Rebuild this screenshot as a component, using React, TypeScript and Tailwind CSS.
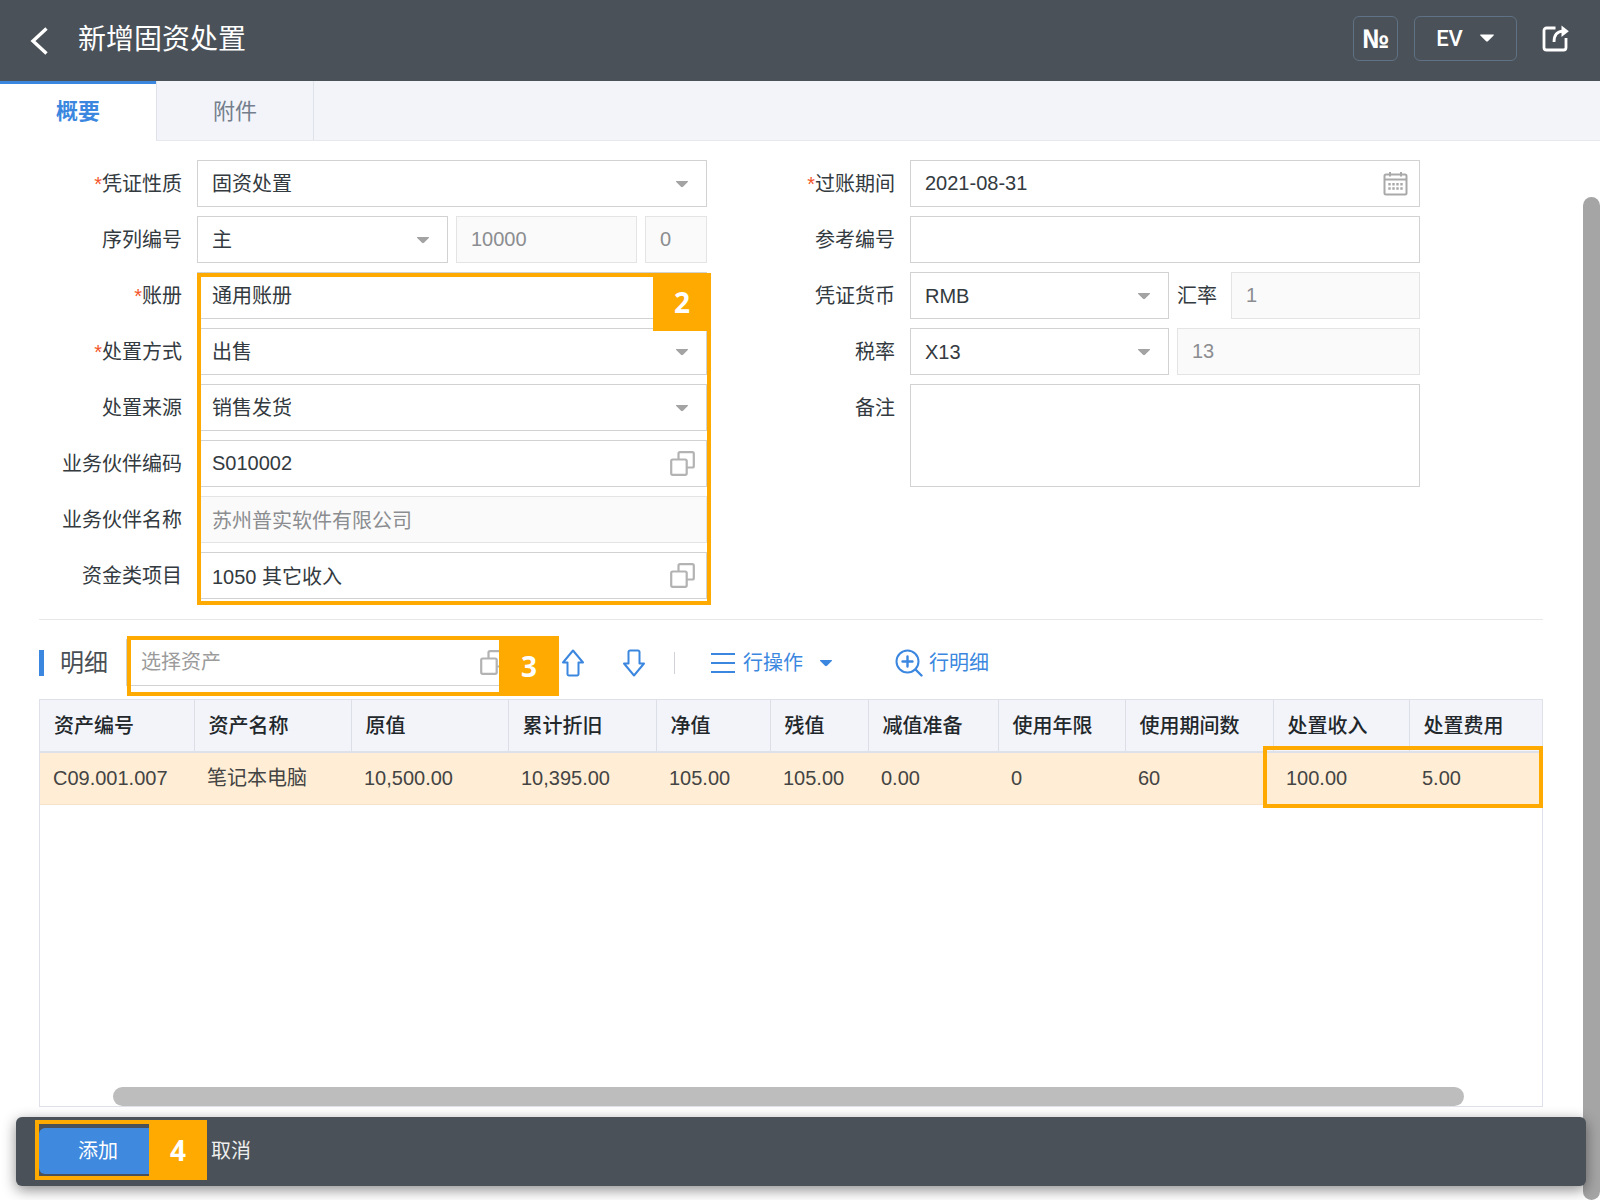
import { useState } from "react";
import type { ReactNode } from "react";

const FIELD =
  "h-[47px] w-full appearance-none rounded-none border border-[#d2d2d2] bg-white px-[14px] text-xl text-[#333a40] outline-none placeholder:text-[#9b9b9b] disabled:border-[#e4e4e4] disabled:bg-[#fafafa] disabled:text-[#8b8d90] disabled:opacity-100";

const LABEL = "pt-[2px] text-xl leading-[45px] whitespace-nowrap text-[#333a40]";

type TabId = "summary" | "attachments";

const TABS: { id: TabId; label: string }[] = [
  { id: "summary", label: "概要" },
  { id: "attachments", label: "附件" },
];

const COLUMNS: { title: string; value: string; width: string }[] = [
  { title: "资产编号", value: "C09.001.007", width: "w-[154px]" },
  { title: "资产名称", value: "笔记本电脑", width: "w-[157px]" },
  { title: "原值", value: "10,500.00", width: "w-[157px]" },
  { title: "累计折旧", value: "10,395.00", width: "w-[148px]" },
  { title: "净值", value: "105.00", width: "w-[114px]" },
  { title: "残值", value: "105.00", width: "w-[98px]" },
  { title: "减值准备", value: "0.00", width: "w-[130px]" },
  { title: "使用年限", value: "0", width: "w-[127px]" },
  { title: "使用期间数", value: "60", width: "w-[148px]" },
  { title: "处置收入", value: "100.00", width: "w-[136px]" },
  { title: "处置费用", value: "5.00", width: "w-[133px]" },
];

/* Icons */

function Caret({ className }: { className: string }) {
  return (
    <svg viewBox="0 0 14 8" className={className} fill="currentColor" aria-hidden="true">
      <path d="M1.6 1h10.8c.6 0 .8.5.4.9L8 6.7c-.6.6-1.4.6-2 0L1.2 1.9C.8 1.5 1 1 1.600 1z" />
    </svg>
  );
}

function PickerIcon() {
  return (
    <svg viewBox="0 0 25 25" className="size-[25px]" fill="none" stroke="#b3b3b3" strokeWidth="2.2" aria-hidden="true">
      <rect x="1.2" y="8.5" width="15.5" height="15.3" rx="1.5" />
      <path d="M8.5 8.5V2.700A1.500 1.500 0 0 1 10 1.200h12.300a1.500 1.500 0 0 1 1.500 1.500V15a1.500 1.500 0 0 1-1.500 1.500h-5.600" />
    </svg>
  );
}

function CalendarIcon() {
  return (
    <svg viewBox="0 0 25 25" className="size-[25px]" fill="none" stroke="#a9a9a9" aria-hidden="true">
      <rect x="1.5" y="3.5" width="22" height="20" rx="1.5" strokeWidth="2" />
      <path d="M1.5 8.500h22M7 1v4.500M18 1v4.500" strokeWidth="2" />
      <path d="M5.300 13.300h14.400M5.300 17.500h14.400" strokeWidth="2.400" strokeDasharray="2.400 1.600" />
    </svg>
  );
}

function ArrowIcon({ down = false }: { down?: boolean }) {
  return (
    <svg
      viewBox="0 0 24 28"
      className={down ? "h-7 w-6 rotate-180" : "h-7 w-6"}
      fill="none"
      stroke="currentColor"
      strokeWidth="2"
      strokeLinejoin="round"
      aria-hidden="true"
    >
      <path d="M12 1.500 22 13.500h-4.500V25a1.500 1.500 0 0 1-1.500 1.500H8A1.500 1.500 0 0 1 6.500 25V13.500H2z" />
    </svg>
  );
}

type MarkerProps = { className: string; flagClass?: string; step?: number };

/* Annotation frame, with a numbered flag at its right end */
function Marker({ className, flagClass = "", step }: MarkerProps) {
  return (
    <div className={`pointer-events-none absolute flex justify-end border-4 border-[#ffaa00] ${className}`}>
      {step && (
        <span
          className={`-m-1 flex items-center justify-center bg-[#ffaa00] font-['Open_Sans','Noto_Sans',sans-serif] text-[28px] leading-none font-bold text-white ${flagClass}`}
        >
          {step}
        </span>
      )}
    </div>
  );
}

type RowProps = { id: string; label: string; required?: boolean; children: ReactNode };

function Row({ id, label, required, children }: RowProps) {
  return (
    <div className="flex items-start gap-[15px]">
      <label htmlFor={id} className={`w-[182px] shrink-0 text-right ${LABEL}`}>
        {required && <span className="text-[#f4552b]">*</span>}
        {label}
      </label>
      <div className="flex min-w-0 flex-1 gap-2">{children}</div>
    </div>
  );
}

function Select({ id, value }: { id: string; value: string }) {
  return (
    <div className="relative min-w-0 flex-1">
      <select id={id} className={FIELD} defaultValue={value}>
        <option>{value}</option>
      </select>
      <Caret className="pointer-events-none absolute top-5 right-[18px] h-2 w-[14px] text-[#a3a3a3]" />
    </div>
  );
}

function Picker({ id, value, icon }: { id: string; value: string; icon: ReactNode }) {
  return (
    <div className="relative min-w-0 flex-1">
      <input id={id} type="text" className={FIELD} defaultValue={value} />
      <button type="button" aria-label="选择" className="absolute top-[11px] right-3">
        {icon}
      </button>
    </div>
  );
}

function DisposalForm() {
  return (
    <form className="grid grid-cols-2 gap-x-[6px] pt-[19px] pr-[163px]">
      <div className="flex flex-col gap-[9px]">
        <Row id="nature" label="凭证性质" required>
          <Select id="nature" value="固资处置" />
        </Row>
        <Row id="series" label="序列编号">
          <Select id="series" value="主" />
          <div className="w-[181px]">
            <input aria-label="编号" className={FIELD} defaultValue="10000" disabled />
          </div>
          <div className="w-[62px]">
            <input aria-label="版本" className={FIELD} defaultValue="0" disabled />
          </div>
        </Row>
        <div className="relative flex flex-col gap-[9px]">
          <Row id="book" label="账册" required>
            <Select id="book" value="通用账册" />
          </Row>
          <Row id="method" label="处置方式" required>
            <Select id="method" value="出售" />
          </Row>
          <Row id="source" label="处置来源">
            <Select id="source" value="销售发货" />
          </Row>
          <Row id="partner-code" label="业务伙伴编码">
            <Picker id="partner-code" value="S010002" icon={<PickerIcon />} />
          </Row>
          <Row id="partner-name" label="业务伙伴名称">
            <input id="partner-name" className={FIELD} defaultValue="苏州普实软件有限公司" disabled />
          </Row>
          <Row id="fund" label="资金类项目">
            <Picker id="fund" value="1050 其它收入" icon={<PickerIcon />} />
          </Row>
          <Marker
            className="top-px -right-1 -bottom-[6px] left-[197px]"
            flagClass="h-[58px] w-[58px]"
            step={2}
          />
        </div>
      </div>

      <div className="flex flex-col gap-[9px]">
        <Row id="period" label="过账期间" required>
          <Picker id="period" value="2021-08-31" icon={<CalendarIcon />} />
        </Row>
        <Row id="reference" label="参考编号">
          <input id="reference" className={FIELD} />
        </Row>
        <Row id="currency" label="凭证货币">
          <Select id="currency" value="RMB" />
          <label htmlFor="rate" className={LABEL}>
            汇率
          </label>
          <div className="w-[195px] pl-[6px]">
            <input id="rate" className={FIELD} defaultValue="1" disabled />
          </div>
        </Row>
        <Row id="tax" label="税率">
          <Select id="tax" value="X13" />
          <div className="w-[243px]">
            <input aria-label="税率值" className={FIELD} defaultValue="13" disabled />
          </div>
        </Row>
        <Row id="remark" label="备注">
          <textarea
            id="remark"
            className="h-[103px] w-full resize-none border border-[#d2d2d2] p-[14px] text-xl text-[#333a40] outline-none"
          />
        </Row>
      </div>
    </form>
  );
}

function DetailToolbar() {
  return (
    <div className="flex h-[47px] items-center text-xl text-[#3b87e0]">
      <h2 className="flex items-center gap-4 text-2xl text-[#4a4f55]">
        <span className="h-[26px] w-[5px] bg-[#3b87e0]" />
        明细
      </h2>
      <div className="relative ml-[18px] w-[393px]">
        <input aria-label="选择资产" placeholder="选择资产" className={FIELD} />
        <button type="button" aria-label="选择" className="absolute top-[11px] right-[14px]">
          <PickerIcon />
        </button>
        <Marker className="-top-[3px] -right-10 -bottom-[10px] left-px" flagClass="w-[60px]" step={3} />
      </div>
      <button type="button" aria-label="上移" className="ml-[42px]">
        <ArrowIcon />
      </button>
      <button type="button" aria-label="下移" className="ml-[37px]">
        <ArrowIcon down />
      </button>
      <span className="ml-7 h-[22px] w-px bg-[#cfd2d8]" />
      <button type="button" className="ml-9 flex items-center gap-2">
        <svg viewBox="0 0 24 22" className="h-[22px] w-6" fill="none" stroke="currentColor" strokeWidth="2" aria-hidden="true">
          <path d="M0 2h24M0 11h24M0 20h24" />
        </svg>
        行操作
        <Caret className="ml-2 h-2 w-[14px]" />
      </button>
      <button type="button" className="ml-[62px] flex items-center gap-[6px]">
        <svg
          viewBox="0 0 28 28"
          className="size-7"
          fill="none"
          stroke="currentColor"
          strokeWidth="2"
          strokeLinecap="round"
          aria-hidden="true"
        >
          <circle cx="12.500" cy="12.500" r="11" />
          <path d="M20.500 20.500 26.500 26.500M12.500 7.500v10M7.500 12.500h10" strokeWidth="2.400" />
        </svg>
        行明细
      </button>
    </div>
  );
}

function DetailTable() {
  return (
    <div className="relative flex min-h-[300px] flex-1 flex-col justify-between border border-[#dfe1ea]">
      <table className="w-full table-fixed border-collapse text-left text-xl">
        <thead>
          <tr className="h-[52px] border-b-2 border-[#dfe1ea] bg-[#f2f4f9]">
            {COLUMNS.map((col) => (
              <th
                key={col.title}
                scope="col"
                className={`border-r border-[#dcdfe8] pl-[14px] font-medium whitespace-nowrap text-[#22272b] last:border-r-0 ${col.width}`}
              >
                {col.title}
              </th>
            ))}
          </tr>
        </thead>
        <tbody>
          <tr className="h-[52px] border-b border-[#f6e2c8] bg-[#ffeed5]">
            {COLUMNS.map((col) => (
              <td key={col.title} className="pl-[13px] whitespace-nowrap text-[#444444]">
                {col.value}
              </td>
            ))}
          </tr>
        </tbody>
      </table>
      <div className="mr-[78px] ml-[73px] h-[19px] rounded-full bg-[#bdbdbd]" />
      <Marker className="top-[46px] -right-px h-[62px] w-[280px]" />
    </div>
  );
}

export default function App() {
  const [activeTab, setActiveTab] = useState<TabId>("summary");

  return (
    <div className="relative flex min-h-screen flex-col bg-white font-['Liberation_Sans','Noto_Sans_CJK_SC',sans-serif]">
      {/* Page header */}
      <header className="flex h-[81px] items-center bg-[#4a5158] pr-[31px] pb-[5px] pl-[30px] text-white">
        <button type="button" aria-label="返回">
          <svg viewBox="0 0 18 28" className="mt-[6px] h-7 w-[18px]" fill="none" stroke="currentColor" strokeWidth="3.4" aria-hidden="true">
            <path d="M16.500 1.500 3 14l13.500 12.500" />
          </svg>
        </button>
        <h1 className="ml-[30px] flex-1 pt-1 text-[28px]">新增固资处置</h1>
        <button
          type="button"
          className="flex size-[45px] items-center justify-center rounded-md border border-[#5f7184] font-['Open_Sans','Noto_Sans',sans-serif] text-[26px] font-bold"
        >
          №
        </button>
        <button
          type="button"
          className="ml-4 flex h-[45px] w-[103px] items-center justify-center gap-4 rounded-md border border-[#5f7184] font-['Roboto',sans-serif] text-[22px] font-medium"
        >
          EV
          <Caret className="h-[10px] w-4" />
        </button>
        <button type="button" aria-label="分享" className="ml-[25px]">
          <svg viewBox="0 0 27 27" className="size-[27px]" fill="none" stroke="currentColor" strokeWidth="2.800" aria-hidden="true">
            <path d="M13.500 3H4.500A2.500 2.500 0 0 0 2 5.500v17A2.500 2.500 0 0 0 4.500 25h17a2.500 2.500 0 0 0 2.500-2.500V13" />
            <path d="M12 17C12 10 15 6.500 21 6.200" />
            <path d="M19.500 .4 26.800 6.200 19.500 12z" fill="currentColor" stroke="none" />
          </svg>
        </button>
      </header>

      {/* Tabs */}
      <nav className="flex h-[60px] border-b border-[#e6e8ee] bg-[#f2f4f9]">
        {TABS.map((tab) => (
          <button
            key={tab.id}
            type="button"
            onClick={() => setActiveTab(tab.id)}
            className={
              activeTab === tab.id
                ? "-mb-px w-[156px] border-t-[3px] border-[#3b87e0] bg-white pb-[2px] text-[22px] font-bold text-[#3b87e0]"
                : "w-[158px] border-x border-[#dfe2e9] pt-[2px] text-[22px] text-[#747e8c]"
            }
          >
            {tab.label}
          </button>
        ))}
      </nav>

      <div className="flex flex-1">
        <main className="flex min-w-0 flex-1 flex-col pb-[93px]">
          <DisposalForm />
          <section className="mt-5 mr-10 ml-[39px] flex flex-1 flex-col gap-[13px] border-t border-[#e8e8e8] pt-[19px]">
            <DetailToolbar />
            <DetailTable />
          </section>
        </main>
        <div className="flex w-[17px] flex-col pt-14">
          <div className="flex-1 rounded-full bg-[#a5a5a5]" />
        </div>
      </div>

      {/* Action bar */}
      <footer className="absolute right-[14px] bottom-[14px] left-4 flex h-[69px] items-center rounded-md bg-[#4a5158] pb-[2px] pl-[23px] text-xl text-white shadow-[0_4px_14px_rgba(0,0,0,0.45)]">
        <button type="button" className="h-[46px] w-[118px] rounded-md bg-[#3f89de]">
          添加
        </button>
        <button type="button" className="ml-[54px] text-[#eeeeee]">
          取消
        </button>
        <Marker className="top-[3px] left-[19px] h-[60px] w-[172px]" flagClass="w-[58px]" step={4} />
      </footer>
    </div>
  );
}
